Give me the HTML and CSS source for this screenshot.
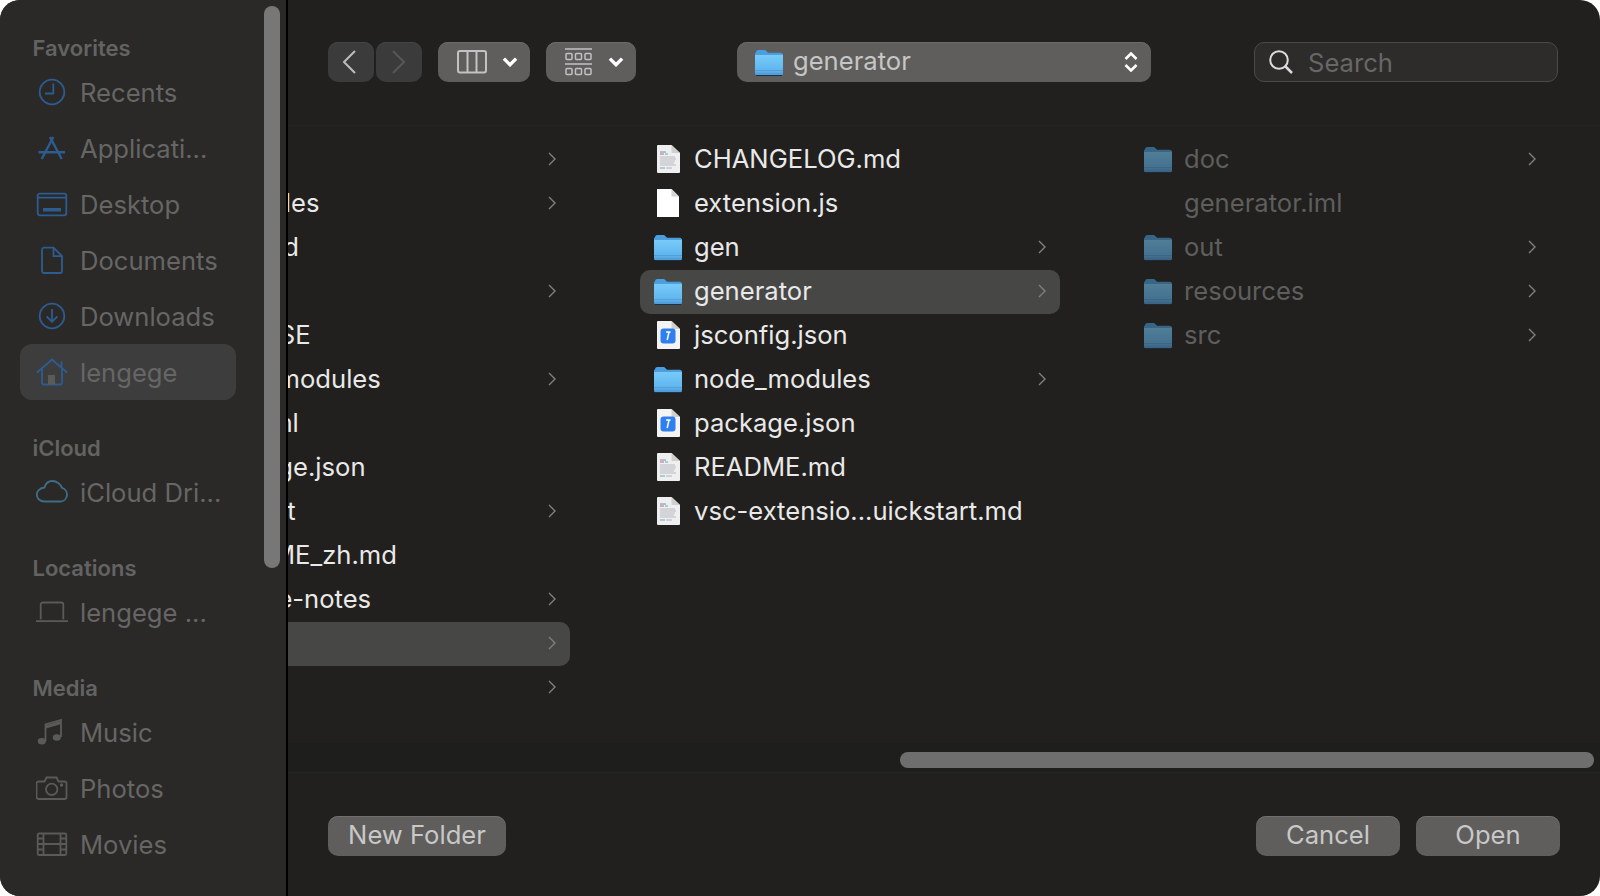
FILE: index.html
```html
<!DOCTYPE html>
<html lang="en">
<head>
<meta charset="utf-8">
<title>Open</title>
<link rel="stylesheet" href="styles.css">
</head>
<body>
<svg class="defs" width="0" height="0" aria-hidden="true">
  <defs>
    <linearGradient id="fg" x1="0" y1="0" x2="0" y2="1">
      <stop offset="0" stop-color="#79cdfb"/>
      <stop offset="1" stop-color="#58aeea"/>
    </linearGradient>
    <symbol id="folder" viewBox="0 0 28 27">
      <path d="M1 3.500C1 2 2 1 3.200 1H9c1 0 1.600.3 2.300 1l1.700 1.800h12.800c1.200 0 2.200 1 2.200 2.200v6H0V4z" fill="#4a9edd"/>
      <rect x="0" y="5" width="28" height="21" rx="1.800" fill="url(#fg)"/>
      <rect x="0" y="5" width="28" height="1" fill="#4f9fdc"/>
      <path d="M0 21h28v3.200c0 1-.8 1.800-1.800 1.800H1.800C.8 26 0 25.200 0 24.200z" fill="#4f9fdc"/>
      <rect x="0" y="22.500" width="28" height=".8" fill="#77bdec"/>
      <rect x="1" y="26" width="26" height="1" fill="#1a3346"/>
    </symbol>
    <symbol id="blank" viewBox="0 0 24 28">
      <path d="M1 0h14.500L23 7.500V28H1z" fill="#fff"/>
      <path d="M15.500 0v7.500H23z" fill="#d4d4d4"/>
    </symbol>
    <symbol id="mdoc" viewBox="0 0 24 28">
      <path d="M1 1a1 1 0 0 1 1-1h13.500L24 8v19a1 1 0 0 1-1 1H2a1 1 0 0 1-1-1z" fill="#efefef"/>
      <path d="M15.500 0v8H24z" fill="#cfcfcf"/>
      <path d="M4 7h6" stroke="#6a8fb0" stroke-width="1"/>
      <path d="M4 9h4" stroke="#c85a9a" stroke-width="1"/>
      <path d="M9 9h3" stroke="#52b3a5" stroke-width="1"/>
      <path d="M4 12h15M4 14h16M4 16h15M4 18h14M4 20h16" stroke="#b5b9c4" stroke-width="1"/>
      <path d="M4 23h5" stroke="#5fb0a8" stroke-width="1"/>
      <path d="M10 23h6" stroke="#aab4cc" stroke-width="1"/>
    </symbol>
    <symbol id="jdoc" viewBox="0 0 24 28">
      <path d="M1 1a1 1 0 0 1 1-1h13.500L24 8v19a1 1 0 0 1-1 1H2a1 1 0 0 1-1-1z" fill="#f4f4f4"/>
      <path d="M15.500 0v8H24z" fill="#cfcfcf"/>
      <rect x="4.500" y="7.500" width="15" height="15" rx="3" fill="#2f7ff0"/>
      <path d="M10 11h4.500M13 11l-1.800 8" stroke="#fff" stroke-width="1.500" fill="none"/>
    </symbol>
    <symbol id="chev" viewBox="0 0 8 14">
      <path d="M1 1l6 6-6 6" fill="none" stroke="#808080" stroke-width="1.400"/>
    </symbol>
    <symbol id="down" viewBox="0 0 14 9">
      <path d="M1.500 1.500L7 7l5.500-5.500" fill="none" stroke="#fff" stroke-width="3"/>
    </symbol>
    <symbol id="i-clock" viewBox="0 0 32 32"><circle cx="16" cy="16" r="12.300"/><path d="M17.300 7.500v10H9"/></symbol>
    <symbol id="i-apps" viewBox="0 0 32 32"><path d="M14 5l11.700 22M17.300 5L5.700 27M2.500 20.300H29" stroke-width="2.400"/></symbol>
    <symbol id="i-desk" viewBox="0 0 32 32"><rect x="1.700" y="5.700" width="28.600" height="21.600" rx="2"/><path d="M1.700 9.700h28.600"/><path d="M7 21.800h18" stroke-width="3.500"/></symbol>
    <symbol id="i-doc" viewBox="0 0 32 32"><path d="M8 3.700h9.500l8.500 8.500v14.800a2 2 0 0 1-2 2H8a2 2 0 0 1-2-2V5.700a2 2 0 0 1 2-2zM17.500 3.700v8.500H26"/></symbol>
    <symbol id="i-dl" viewBox="0 0 32 32"><circle cx="16" cy="16" r="12.300"/><path d="M16 9v12.500M10.700 16.500l5.300 5.300 5.300-5.300"/></symbol>
    <symbol id="i-home" viewBox="0 0 32 32"><path d="M1 16.500L16 3.500l15 13M6 13v13.500a2 2 0 0 0 2 2h16a2 2 0 0 0 2-2V13M25.500 5.500v7"/><rect x="12" y="19" width="7" height="9.500" stroke="none" class="f"/></symbol>
    <symbol id="i-cloud" viewBox="0 0 32 32"><path d="M8.500 25.500h15.500a7 7 0 0 0 2-13.700C24.500 8 20.500 5 16.500 5 12.500 5 9.500 7.500 8.500 11.500 4 12 .8 15 .8 18.500.8 22.500 4 25.500 8.500 25.500z"/></symbol>
    <symbol id="i-lap" viewBox="0 0 32 32"><path d="M4.700 23.500V8.500a2 2 0 0 1 2-2h18.600a2 2 0 0 1 2 2v15M-1 25.200h34"/></symbol>
    <symbol id="i-music" viewBox="0 0 32 32"><path d="M9.500 25V8.500L25 4v17" /><ellipse cx="5.800" cy="25.300" rx="4" ry="3.300" class="f" stroke="none"/><ellipse cx="20.800" cy="21.500" rx="4" ry="3.300" class="f" stroke="none"/><path d="M9.500 11L25 6.500" stroke-width="3"/></symbol>
    <symbol id="i-cam" viewBox="0 0 32 32"><path d="M2.500 9.500h6l2-4h10l2 4h6a2 2 0 0 1 2 2v13.500a2 2 0 0 1-2 2h-26a2 2 0 0 1-2-2V11.500a2 2 0 0 1 2-2z"/><circle cx="15.700" cy="17.300" r="5.700"/><circle cx="25.500" cy="13" r=".8"/></symbol>
    <symbol id="i-film" viewBox="0 0 32 32"><rect x="1.700" y="5.500" width="28.600" height="21.500" rx="1.500"/><path d="M7.500 5.500v21.500M24.500 5.500v21.500M7.500 16h17M1.700 10.500h5.800M1.700 16h5.800M1.700 21.500h5.800M24.500 10.500h5.800M24.500 16h5.800M24.500 21.500h5.800"/></symbol>
  </defs>
</svg>

<div class="window">
  <aside class="sidebar">
    <nav class="side-scroll">
      <section class="group">
        <h2 class="group-title">Favorites</h2>
        <div class="side-row"><svg class="side-icon blue"><use href="#i-clock"/></svg><span>Recents</span></div>
        <div class="side-row"><svg class="side-icon blue"><use href="#i-apps"/></svg><span>Applicati...</span></div>
        <div class="side-row"><svg class="side-icon blue"><use href="#i-desk"/></svg><span>Desktop</span></div>
        <div class="side-row"><svg class="side-icon blue"><use href="#i-doc"/></svg><span>Documents</span></div>
        <div class="side-row"><svg class="side-icon blue"><use href="#i-dl"/></svg><span>Downloads</span></div>
        <div class="side-row is-active"><svg class="side-icon blue"><use href="#i-home"/></svg><span>lengege</span></div>
      </section>
      <section class="group">
        <h2 class="group-title">iCloud</h2>
        <div class="side-row"><svg class="side-icon teal"><use href="#i-cloud"/></svg><span>iCloud Dri...</span></div>
      </section>
      <section class="group">
        <h2 class="group-title">Locations</h2>
        <div class="side-row"><svg class="side-icon gray"><use href="#i-lap"/></svg><span>lengege ...</span></div>
      </section>
      <section class="group">
        <h2 class="group-title">Media</h2>
        <div class="side-row"><svg class="side-icon gray"><use href="#i-music"/></svg><span>Music</span></div>
        <div class="side-row"><svg class="side-icon gray"><use href="#i-cam"/></svg><span>Photos</span></div>
        <div class="side-row"><svg class="side-icon gray"><use href="#i-film"/></svg><span>Movies</span></div>
      </section>
    </nav>
    <div class="side-thumb"></div>
  </aside>

  <main class="main">
    <header class="toolbar">
      <div class="nav-pair">
        <button class="tb-btn nav nav-back"><svg class="nav-icon" viewBox="0 0 14 24"><path d="M13 1L2 12l11 11" fill="none" stroke="#bdbdbd" stroke-width="2"/></svg></button>
        <button class="tb-btn nav"><svg class="nav-icon" viewBox="0 0 14 24"><path d="M1 1l11 11L1 23" fill="none" stroke="#575757" stroke-width="2"/></svg></button>
      </div>
      <button class="tb-btn view">
        <svg class="view-icon" viewBox="0 0 30 24"><rect x="1" y="1" width="28" height="21.500" rx="2" fill="none" stroke="#c2c2c2" stroke-width="2"/><path d="M10.500 1v21.500M19.500 1v21.500" stroke="#c2c2c2" stroke-width="2"/></svg>
        <svg class="down"><use href="#down"/></svg>
      </button>
      <button class="tb-btn group-btn">
        <svg class="grp-icon" viewBox="0 0 28 28"><path d="M0 1h27M0 16h27" stroke="#c2c2c2" stroke-width="1.500"/><g fill="none" stroke="#c2c2c2" stroke-width="1.500"><rect x="1" y="5.500" width="6" height="6" rx="1"/><rect x="10.500" y="5.500" width="6" height="6" rx="1"/><rect x="20" y="5.500" width="6" height="6" rx="1"/><rect x="1" y="20.500" width="6" height="6" rx="1"/><rect x="10.500" y="20.500" width="6" height="6" rx="1"/><rect x="20" y="20.500" width="6" height="6" rx="1"/></g></svg>
        <svg class="down"><use href="#down"/></svg>
      </button>
      <div class="tb-btn path">
        <svg class="path-folder"><use href="#folder"/></svg>
        <span class="path-label">generator</span>
        <svg class="updown" viewBox="0 0 14 20"><path d="M1.500 7L7 1.500 12.500 7M1.500 13L7 18.500 12.500 13" fill="none" stroke="#fff" stroke-width="2.600"/></svg>
      </div>
      <div class="search">
        <svg class="search-icon" viewBox="0 0 24 24"><circle cx="10" cy="10" r="8.800" fill="none" stroke="#dcdcdc" stroke-width="2"/><path d="M16.500 16.500l6.500 6.500" stroke="#dcdcdc" stroke-width="2.500"/></svg>
        <span class="search-label">Search</span>
      </div>
    </header>

    <div class="browser">
      <div class="column col-first">
        <div class="row"><span class="ic"></span><span class="name">docs</span><svg class="chev"><use href="#chev"/></svg></div>
        <div class="row"><span class="ic"></span><span class="name">examples</span><svg class="chev"><use href="#chev"/></svg></div>
        <div class="row"><span class="ic"></span><span class="name">Android</span></div>
        <div class="row"><span class="ic"></span><span class="name">lib</span><svg class="chev"><use href="#chev"/></svg></div>
        <div class="row"><span class="ic"></span><span class="name">LICENSE</span></div>
        <div class="row"><span class="ic"></span><span class="name">node_modules</span><svg class="chev"><use href="#chev"/></svg></div>
        <div class="row"><span class="ic"></span><span class="name">pkg.xml</span></div>
        <div class="row"><span class="ic"></span><span class="name">package.json</span></div>
        <div class="row"><span class="ic"></span><span class="name">content</span><svg class="chev"><use href="#chev"/></svg></div>
        <div class="row"><span class="ic"></span><span class="name">README_zh.md</span></div>
        <div class="row"><span class="ic"></span><span class="name">release-notes</span><svg class="chev"><use href="#chev"/></svg></div>
        <div class="row is-sel"><span class="ic"></span><span class="name">src</span><svg class="chev"><use href="#chev"/></svg></div>
        <div class="row"><span class="ic"></span><span class="name">test</span><svg class="chev"><use href="#chev"/></svg></div>
      </div>
      <div class="column">
        <div class="row"><span class="ic"><svg class="doc"><use href="#mdoc"/></svg></span><span class="name">CHANGELOG.md</span></div>
        <div class="row"><span class="ic"><svg class="doc"><use href="#blank"/></svg></span><span class="name">extension.js</span></div>
        <div class="row"><span class="ic"><svg class="fold"><use href="#folder"/></svg></span><span class="name">gen</span><svg class="chev"><use href="#chev"/></svg></div>
        <div class="row is-sel"><span class="ic"><svg class="fold"><use href="#folder"/></svg></span><span class="name">generator</span><svg class="chev"><use href="#chev"/></svg></div>
        <div class="row"><span class="ic"><svg class="doc"><use href="#jdoc"/></svg></span><span class="name">jsconfig.json</span></div>
        <div class="row"><span class="ic"><svg class="fold"><use href="#folder"/></svg></span><span class="name">node_modules</span><svg class="chev"><use href="#chev"/></svg></div>
        <div class="row"><span class="ic"><svg class="doc"><use href="#jdoc"/></svg></span><span class="name">package.json</span></div>
        <div class="row"><span class="ic"><svg class="doc"><use href="#mdoc"/></svg></span><span class="name">README.md</span></div>
        <div class="row"><span class="ic"><svg class="doc"><use href="#mdoc"/></svg></span><span class="name">vsc-extensio...uickstart.md</span></div>
      </div>
      <div class="column col-dim">
        <div class="row"><span class="ic"><svg class="fold"><use href="#folder"/></svg></span><span class="name">doc</span><svg class="chev"><use href="#chev"/></svg></div>
        <div class="row"><span class="ic"></span><span class="name">generator.iml</span></div>
        <div class="row"><span class="ic"><svg class="fold"><use href="#folder"/></svg></span><span class="name">out</span><svg class="chev"><use href="#chev"/></svg></div>
        <div class="row"><span class="ic"><svg class="fold"><use href="#folder"/></svg></span><span class="name">resources</span><svg class="chev"><use href="#chev"/></svg></div>
        <div class="row"><span class="ic"><svg class="fold"><use href="#folder"/></svg></span><span class="name">src</span><svg class="chev"><use href="#chev"/></svg></div>
      </div>
    </div>

    <div class="hscroll"><div class="hthumb"></div></div>

    <footer class="footer">
      <button class="btn btn-new">New Folder</button>
      <div class="footer-actions">
        <button class="btn btn-act">Cancel</button>
        <button class="btn btn-act">Open</button>
      </div>
    </footer>
  </main>
</div>
</body>
</html>
```
FILE: styles.css
```css
* { box-sizing: border-box; }
html, body { margin: 0; padding: 0; height: 100%; background: #fff; overflow: hidden; }
body { font-family: Inter, "Noto Sans", "Liberation Sans", sans-serif; }
.defs { display: block; width: 0; height: 0; overflow: hidden; }

.window {
  display: flex;
  width: 1600px;
  height: 896px;
  border-radius: 20px;
  overflow: hidden;
  background: #21201e;
}

/* Sidebar */
.sidebar {
  position: relative;
  flex: none;
  width: 288px;
  background: #2a2928;
  border-right: 2px solid #000;
}
.side-scroll { padding: 31px 0 0 20px; }
.group { width: 216px; margin-bottom: 31px; }
.group-title {
  margin: 0;
  height: 33px;
  padding-left: 12.500px;
  font-size: 22px;
  line-height: 34px;
  font-weight: 600;
  color: #636362;
}
.side-row {
  display: flex;
  align-items: center;
  height: 56px;
  padding-left: 16px;
  gap: 12px;
  border-radius: 12px;
  font-size: 25.600px;
  color: #666665;
  white-space: nowrap;
}
.side-row.is-active { background: #3e3d3e; }
.side-icon {
  flex: none;
  width: 32px;
  height: 32px;
  overflow: visible;
  fill: none;
  stroke-width: 1.800;
}
.side-icon.blue { stroke: #2d5c91; }
.side-icon.teal { stroke: #3d6e85; }
.side-icon.gray { stroke: #5a5a59; }
.f { fill: #5a5a59; }
.side-icon.blue .f { fill: #2d5c91; }
.side-thumb {
  position: absolute;
  top: 6px;
  left: 264px;
  width: 16px;
  height: 562px;
  border-radius: 8px;
  background: #777;
}

/* Main */
.main { flex: 1; min-width: 0; display: flex; flex-direction: column; }
.toolbar {
  flex: none;
  display: flex;
  align-items: flex-start;
  height: 126px;
  padding: 42px 0 0 40px;
  border-bottom: 1px solid #252423;
}
.tb-btn {
  display: flex;
  align-items: center;
  height: 40px;
  padding: 0;
  border: 0;
  border-radius: 10px;
  font-family: inherit;
  background: #5f5e5c;
  box-shadow: inset 0 1px 0 #6c6b69;
}
.nav-pair { display: flex; gap: 2px; }
.tb-btn.nav {
  justify-content: center;
  width: 46px;
  background: #3b3b3b;
  box-shadow: inset 0 1px 0 #444;
}
.tb-btn.nav-back { padding-right: 4px; }
.nav-icon { width: 14px; height: 24px; }
.view { width: 92px; margin-left: 16px; padding-left: 19px; }
.view-icon { width: 30px; height: 24px; }
.down { width: 16px; height: 10px; }
.view .down { margin-left: 15px; }
.group-btn { width: 90px; margin-left: 16px; padding-left: 19px; }
.grp-icon { width: 28px; height: 28px; }
.group-btn .down { margin-left: 15px; }
.path { width: 414px; margin-left: 101px; padding: 0 13px 0 18px; }
.path-folder { flex: none; width: 28px; height: 27px; }
.path-label { flex: 1; margin-left: 10px; padding-bottom: 3px; font-size: 25.600px; color: #c6c6c6; }
.updown { width: 14px; height: 20px; }
.search {
  display: flex;
  align-items: center;
  width: 304px;
  height: 40px;
  margin-left: 103px;
  padding-left: 14px;
  border: 1px solid #4b4a48;
  border-radius: 10px;
  background: #2d2c2b;
}
.search-icon { width: 24px; height: 24px; }
.search-label { margin-left: 15px; font-size: 25.600px; color: #676766; }

/* Columns */
.browser {
  flex: 1;
  min-height: 0;
  display: flex;
  padding-top: 12px;
  overflow: hidden;
}
.column { flex: none; width: 490px; padding-left: 10px; }
.col-first { margin-left: -148px; }
.row {
  display: flex;
  align-items: center;
  width: 420px;
  height: 44px;
  padding: 0 14px 2px 12px;
  border-radius: 10px;
  font-size: 25.600px;
  color: #e9e9e9;
  white-space: nowrap;
}
.row.is-sel { background: #474746; }
.ic { flex: none; display: flex; justify-content: center; align-items: center; width: 30px; height: 30px; margin: 0 11px 0 1px; }
.name { flex: 1; margin-bottom: 2px; }
.doc { width: 24px; height: 28px; }
.fold { width: 28px; height: 27px; }
.chev { flex: none; width: 8px; height: 14px; }
.col-dim .row { color: #5e5e5d; }
.col-dim .fold { opacity: .55; }

/* Horizontal scroller */
.hscroll { flex: none; height: 30px; padding: 9px 0 0 612px; background: #1e1e1d; border-bottom: 1px solid #252423; }
.hthumb { width: 694px; height: 16px; border-radius: 8px; background: #6e6e6e; }

/* Footer */
.footer {
  flex: none;
  display: flex;
  justify-content: space-between;
  height: 123px;
  padding: 43px 40px 0;
}
.footer-actions { display: flex; gap: 16px; }
.btn {
  height: 40px;
  padding: 0 0 3px;
  border: 0;
  border-radius: 10px;
  font-family: inherit;
  font-size: 25.600px;
  color: #c8c8c8;
  background: #5f5e5c;
  box-shadow: inset 0 1px 0 #706f6d;
}
.btn-new { width: 178px; }
.btn-act { width: 144px; }
```
